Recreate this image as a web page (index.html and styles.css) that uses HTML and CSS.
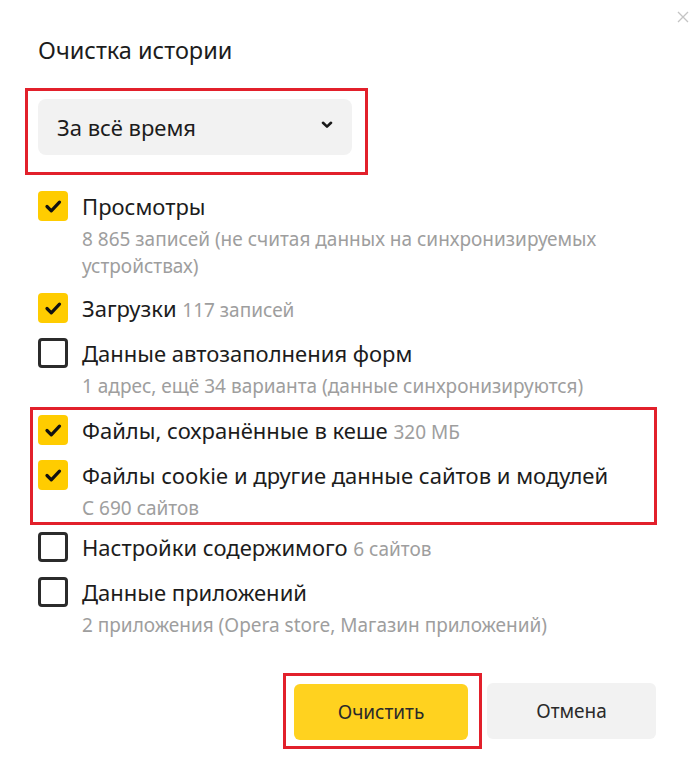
FILE: index.html
```html
<!DOCTYPE html>
<html lang="ru">
<head>
<meta charset="utf-8">
<title>Очистка истории</title>
<link rel="stylesheet" href="styles.css">
</head>
<body>
<div class="dialog">
  <button class="close" aria-label="Закрыть">
    <svg width="12" height="12" viewBox="0 0 12 12"><path d="M1 1L11 11M11 1L1 11" stroke="#c4c4c4" stroke-width="1.3" fill="none"/></svg>
  </button>
  <h1 class="title">Очистка истории</h1>

  <div class="mark mark-select">
    <div class="select">
      <span>За всё время</span>
      <svg class="chevron" width="12" height="8" viewBox="0 0 12 8"><path d="M2 1.8L6 5.6L10 1.8" stroke="#1a1a1a" stroke-width="2.6" fill="none" stroke-linecap="round" stroke-linejoin="round"/></svg>
    </div>
  </div>

  <div class="list">
    <div class="item">
      <span class="box on"><svg viewBox="0 0 30 30"><path d="M9 15.5L13.3 19.8L21.5 11.2"/></svg></span>
      <div class="text">
        <div class="label">Просмотры</div>
        <div class="sub">8 865 записей (не считая данных на синхронизируемых устройствах)</div>
      </div>
    </div>
    <div class="item">
      <span class="box on"><svg viewBox="0 0 30 30"><path d="M9 15.5L13.3 19.8L21.5 11.2"/></svg></span>
      <div class="text">
        <div class="label">Загрузки <span class="muted">117 записей</span></div>
      </div>
    </div>
    <div class="item">
      <span class="box"></span>
      <div class="text">
        <div class="label">Данные автозаполнения форм</div>
        <div class="sub">1 адрес, ещё 34 варианта (данные синхронизируются)</div>
      </div>
    </div>

    <div class="mark mark-files">
      <div class="item">
        <span class="box on"><svg viewBox="0 0 30 30"><path d="M9 15.5L13.3 19.8L21.5 11.2"/></svg></span>
        <div class="text">
          <div class="label">Файлы, сохранённые в кеше <span class="muted">320 МБ</span></div>
        </div>
      </div>
      <div class="item">
        <span class="box on"><svg viewBox="0 0 30 30"><path d="M9 15.5L13.3 19.8L21.5 11.2"/></svg></span>
        <div class="text">
          <div class="label">Файлы cookie и другие данные сайтов и модулей</div>
          <div class="sub">С 690 сайтов</div>
        </div>
      </div>
    </div>

    <div class="item">
      <span class="box"></span>
      <div class="text">
        <div class="label">Настройки содержимого <span class="muted">6 сайтов</span></div>
      </div>
    </div>
    <div class="item">
      <span class="box"></span>
      <div class="text">
        <div class="label">Данные приложений</div>
        <div class="sub">2 приложения (Opera store, Магазин приложений)</div>
      </div>
    </div>
  </div>

  <div class="actions">
    <div class="mark mark-btn">
      <button class="btn primary">Очистить</button>
    </div>
    <button class="btn secondary">Отмена</button>
  </div>
</div>
</body>
</html>
```

FILE: styles.css
```css
* { box-sizing: border-box; }

html, body {
  margin: 0;
  padding: 0;
  background: #ffffff;
}

body {
  font-family: "Noto Sans", "Open Sans", sans-serif;
  color: #1f1f1f;
}

.dialog {
  position: relative;
  width: 700px;
  height: 778px;
  padding: 35px 44px 0 38px;
  display: flex;
  flex-direction: column;
}

.close {
  position: absolute;
  top: 10px;
  right: 10px;
  width: 14px;
  height: 14px;
  padding: 0;
  border: 0;
  background: none;
  display: flex;
  align-items: center;
  justify-content: center;
}

.title {
  margin: 0 0 23px 0;
  font-size: 23.5px;
  line-height: 30px;
  font-weight: 400;
  color: #1c1c1c;
}

.mark {
  border: 3px solid #e2202b;
}

.mark-select {
  align-self: flex-start;
  margin-left: -13px;
  padding: 8px 13px 17px 10px;
}

.select {
  width: 314px;
  height: 56px;
  border-radius: 8px;
  background: #f2f2f2;
  display: flex;
  align-items: center;
  justify-content: space-between;
  padding: 0 19px 0 19px;
  font-size: 22px;
  color: #1c1c1c;
}

.chevron { margin-top: -4px; }

.list {
  margin-top: 16px;
  display: flex;
  flex-direction: column;
  gap: 13px;
}

.item {
  display: flex;
  align-items: flex-start;
  gap: 14px;
}

.box {
  flex: none;
  width: 30px;
  height: 30px;
  border-radius: 4px;
  border: 3px solid #2b2b2b;
  background: #fff;
}

.box.on {
  border: 0;
  background: #ffcc00;
}

.box svg {
  display: block;
  width: 30px;
  height: 30px;
}

.box svg path {
  fill: none;
  stroke: #111;
  stroke-width: 3.2;
  stroke-linecap: round;
  stroke-linejoin: round;
}

.text {
  display: flex;
  flex-direction: column;
}

.label {
  font-size: 22px;
  line-height: 30px;
  color: #1c1c1c;
}

.muted {
  font-size: 19px;
  color: #9e9e9e;
}

.sub {
  margin-top: 5px;
  font-size: 19px;
  line-height: 27px;
  color: #9e9e9e;
  max-width: 540px;
}

.mark-files {
  margin: -6px -1px -6px -8px;
  padding: 5px 5px 0 5px;
  display: flex;
  flex-direction: column;
  gap: 13px;
}

.actions {
  margin-top: 34px;
  display: flex;
  justify-content: flex-end;
  align-items: center;
  gap: 5px;
}

.mark-btn {
  padding: 8px 11px 6px 8px;
}

.btn {
  height: 56px;
  border: 0;
  border-radius: 6px;
  font-family: "Noto Sans", "Open Sans", sans-serif;
  font-size: 19px;
  color: #2a2a2a;
}

.btn.primary {
  width: 174px;
  background: #ffd21f;
}

.btn.secondary {
  width: 169px;
  background: #f2f2f2;
}
```
